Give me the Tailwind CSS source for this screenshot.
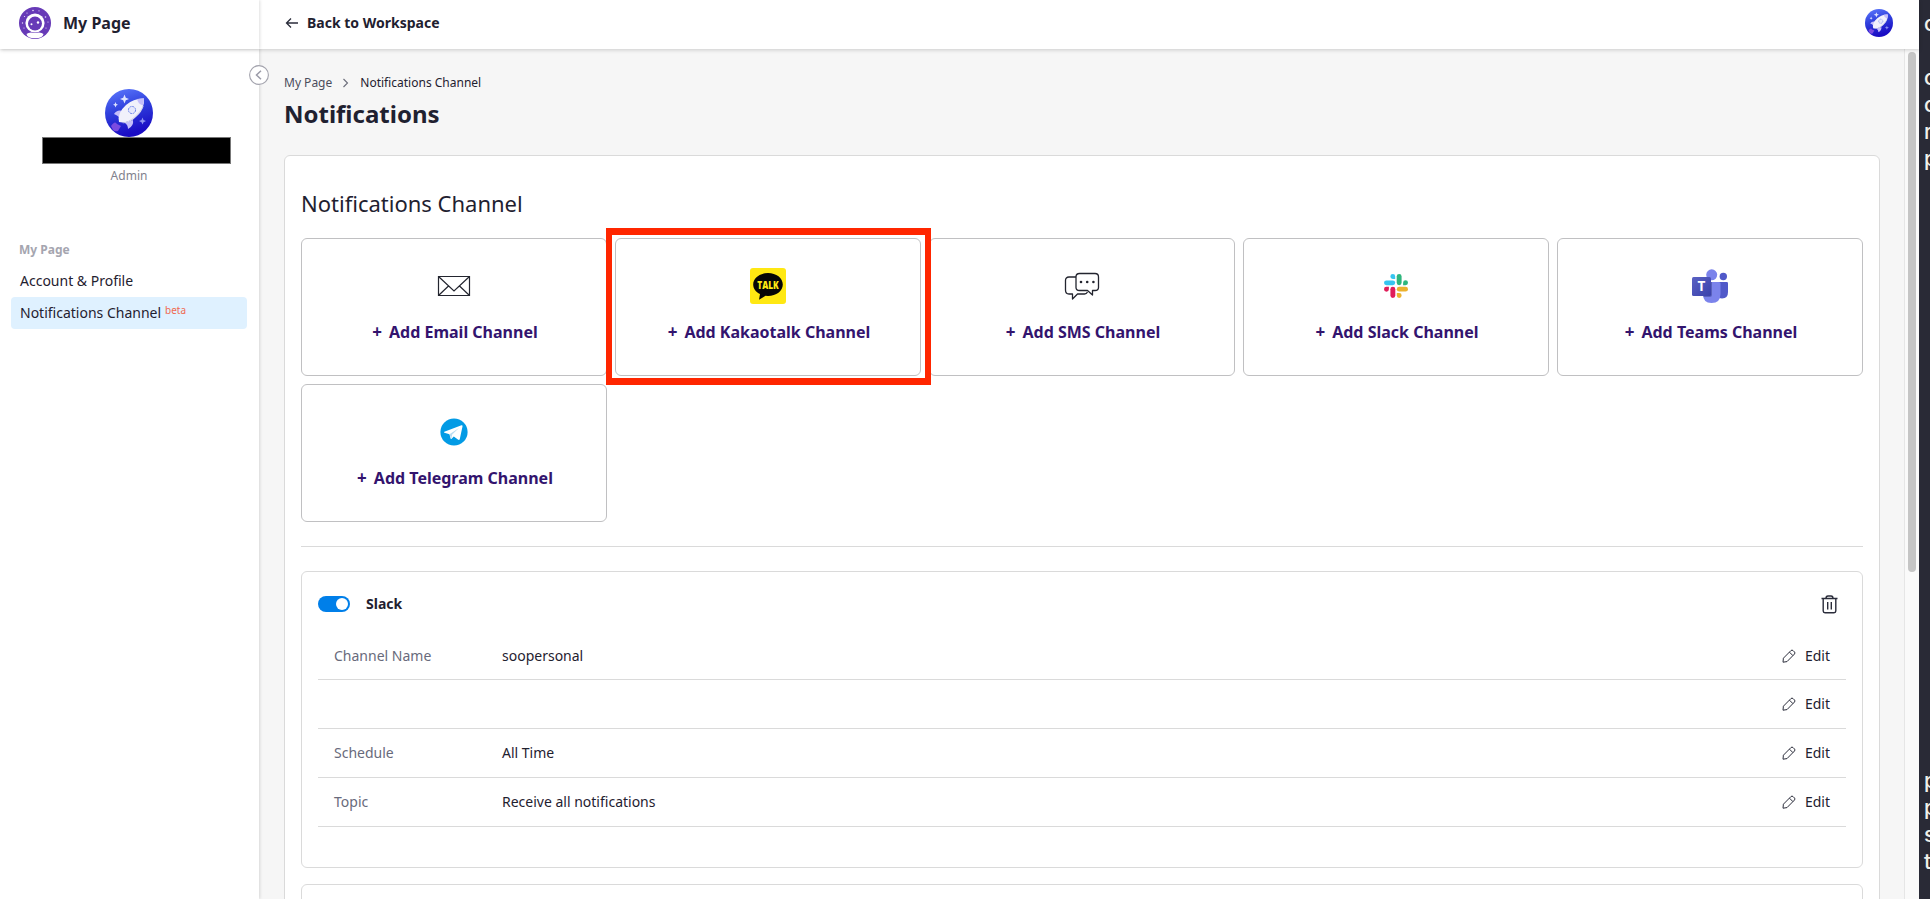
<!DOCTYPE html>
<html lang="en">
<head>
<meta charset="utf-8">
<title>Notifications</title>
<script src="https://cdn.jsdelivr.net/npm/@tailwindcss/browser@4"></script>
</head>
<body class="h-[899px] w-[1930px] overflow-hidden bg-white font-['Noto_Sans',sans-serif] text-[#1f2130]">
<svg class="absolute size-0">
  <defs>
    <linearGradient id="sky" x1="0" y1="0" x2="0.3" y2="1"><stop offset="0" stop-color="#5f7cff"/><stop offset="0.5" stop-color="#2f3fdc"/><stop offset="1" stop-color="#1a0cc4"/></linearGradient>
    <linearGradient id="tm" x1="0" y1="0" x2="1" y2="1"><stop offset="0" stop-color="#5a62c3"/><stop offset="1" stop-color="#3940ab"/></linearGradient>
  </defs>
  <symbol id="rocket" viewBox="0 0 48 48">
    <circle cx="24" cy="24" r="24" fill="url(#sky)"/>
    <path d="M6 37Q10 31 12 35L16 37L13 42Q10 43 8 41Z" fill="#7a4be0"/>
    <path d="M9 25Q12 20 18 22L15 29Q12 26 9 25ZM28 31Q29 37 23 40Q23 36 20 34Z" fill="#c5befa"/>
    <path d="M14 33Q12 24 21 16Q29 9 39 9.500Q40 19 31 27Q23 35 14 33Z" fill="#f1f1fb"/>
    <path d="M17 34Q29 32 39 16Q37 23 31 28Q24 35 17 34Z" fill="#d9d9ec"/>
    <path d="M32 10Q35 9.200 39 9.500Q39.200 13 38 16.500Q33 15 32 10Z" fill="#c5befa"/>
    <circle cx="27" cy="21" r="3.600" fill="#e6e8fc" stroke="#6f86ea" stroke-width="1" stroke-dasharray="2 .8"/>
    <path d="M19.500 5.500L20.800 8.700L24 10L20.800 11.300L19.500 14.500L18.200 11.300L15 10L18.200 8.700ZM10.500 13L11.300 15L13 15.800L11.300 16.600L10.500 18.500L9.700 16.600L8 15.800L9.700 15Z" fill="#dfe4ff"/>
    <path d="M37.500 28.500L38.500 31L41 32L38.500 33.200L37.500 35.500L36.500 33.200L34 32L36.500 31Z" fill="#8f94f0"/>
  </symbol>
  <symbol id="pencil" viewBox="0 0 14 14">
    <path d="M1 13.200L1.400 9.200L9 1.500Q10 .7 11 1.500L12.600 3.100Q13.300 4 12.500 5L5 12.600L1 13.200M7.500 3.200L10.900 6.600" fill="none" stroke="#2b2d3b" stroke-width="1"/>
  </symbol>
</svg>
<div class="flex h-[899px]">
  <div class="flex w-[1919px] flex-none flex-col">
    <header class="relative z-10 flex h-[49px] flex-none bg-white shadow-[0_1px_4px_rgba(0,0,0,0.18)]">
      <div class="flex w-[259px] items-center gap-[12px] pb-[3px] pl-[19px] shadow-[1px_0_3px_rgba(0,0,0,0.13)]">
        <svg class="size-8" viewBox="0 0 32 32">
          <circle cx="16" cy="16" r="16" fill="#673ab7"/>
          <path d="M7.500 27Q10 24.500 16 26Q22 24.500 24.500 27Q24 31.200 16 31.200Q8 31.200 7.500 27Z" fill="#fff"/>
          <circle cx="16" cy="16" r="9.600" fill="#fff"/><circle cx="16" cy="16.600" r="7" fill="#673ab7"/>
          <circle cx="12.500" cy="17.300" r="1" fill="#fff"/><circle cx="19" cy="15.500" r="1.200" fill="#fff"/>
          <g fill="#e8defa"><circle cx="14" cy="3.500" r=".8"/><circle cx="20" cy="3.800" r=".6"/><circle cx="8" cy="6" r=".6"/><circle cx="26.500" cy="10" r=".8"/><circle cx="5.500" cy="9.500" r=".6"/><circle cx="3.500" cy="16" r=".7"/><circle cx="29" cy="15" r=".6"/><circle cx="5" cy="21" r=".6"/><circle cx="27" cy="21" r=".6"/></g>
        </svg>
        <span class="text-base font-bold">My Page</span>
      </div>
      <div class="flex flex-1 items-center pr-[26px] pb-[3px] pl-[26px]">
        <svg class="h-[12px] w-[14px]" viewBox="0 0 14 12"><path d="M13 6H1.500M6 1.500L1.500 6L6 10.500" fill="none" stroke="#2b2d3b" stroke-width="1.300"/></svg>
        <span class="ml-[8px] text-sm font-bold">Back to Workspace</span>
        <svg class="ml-auto size-7"><use href="#rocket"/></svg>
      </div>
    </header>
    <div class="flex min-h-0 flex-1">
      <aside class="relative z-[5] flex w-[259px] flex-none flex-col bg-white shadow-[1px_0_3px_rgba(0,0,0,0.13)]">
        <svg class="absolute top-[16px] left-[249px] size-5" viewBox="0 0 20 20"><circle cx="10" cy="10" r="9.400" fill="#fff" stroke="#a3a3ad" stroke-width="1.100"/><path d="M12 5.800L7.500 10L12 14.200" fill="none" stroke="#9b9ba8" stroke-width="1.500"/></svg>
        <div class="flex flex-col items-center pt-[40px] pr-px">
          <svg class="size-12"><use href="#rocket"/></svg>
          <div class="ml-[14px] h-[27px] w-[189px] border border-[#777] bg-black"></div>
          <div class="mt-[3px] text-xs leading-[18px] text-[#82828d]">Admin</div>
        </div>
        <div class="mt-[56px] pl-[19px] text-xs leading-[18px] font-bold text-[#a5a5af]">My Page</div>
        <nav class="mt-[6px] ml-[11px] w-[236px] text-sm">
          <div class="flex h-8 items-center pl-[9px]">Account &amp; Profile</div>
          <div class="flex h-8 items-center rounded bg-[#dff1ff] pl-[9px]">Notifications Channel<span class="ml-1 pb-[5px] text-[10px] text-[#f0694f]">beta</span></div>
        </nav>
      </aside>
      <main class="flex h-full min-w-0 flex-1 flex-col overflow-hidden bg-[#f6f6f6] pr-[24px] pl-[25px]">
        <div class="mt-[25px] flex flex-none items-center text-xs leading-[18px] text-[#4b4d5c]">My Page
          <svg class="mr-[11px] ml-[10px] h-[10px] w-[7px]" viewBox="0 0 7 10"><path d="M1.500 1L5.500 5L1.500 9" fill="none" stroke="#6b6d7a" stroke-width="1.100"/></svg>
          <span class="text-[#1f2130]">Notifications Channel</span></div>
        <h1 class="mt-[4px] flex-none text-2xl leading-9 font-bold">Notifications</h1>
        <section class="mt-[23px] h-[900px] w-[1596px] flex-none rounded-md border border-[#dadada] bg-white px-4 pt-[31px]">
          <h2 class="text-[22px] leading-[32px]">Notifications Channel</h2>
          <div class="relative mt-[19px] grid grid-cols-5 gap-2 text-base font-bold text-[#33146e]">
            <div class="flex h-[138px] flex-col items-center rounded-md border border-[#c0c0c2] pt-[29px]">
              <svg class="size-9" viewBox="0 0 36 36"><path d="M2.500 8.500H33.500V27.500H2.500ZM2.500 8.500L18 23L33.500 8.500M2.500 27.500L12.500 18M33.500 27.500L23.500 18" fill="none" stroke="#23252f" stroke-width="1.200"/></svg>
              <div class="mt-[16px] ml-[2px] flex gap-[7px] leading-6"><span class="text-[17px]">+</span>Add Email Channel</div>
            </div>
            <div class="flex h-[138px] flex-col items-center rounded-md border border-[#c0c0c2] pt-[29px]">
              <svg class="size-9" viewBox="0 0 36 36"><rect width="36" height="36" rx="3" fill="#ffe812"/><path d="M18 5C9.700 5 3.200 10 3.200 16.500C3.200 20.500 5.800 24 10 26L9 31.800L15.500 27.800L18 28C26.300 28 32.800 22.900 32.800 16.500S26.300 5 18 5Z" fill="#060606"/><text x="18" y="20.600" text-anchor="middle" textLength="21.500" lengthAdjust="spacingAndGlyphs" font-size="10.800" font-weight="900" fill="#ffe812" font-family="Open Sans, sans-serif">TALK</text></svg>
              <div class="mt-[16px] ml-[2px] flex gap-[7px] leading-6"><span class="text-[17px]">+</span>Add Kakaotalk Channel</div>
            </div>
            <div class="flex h-[138px] flex-col items-center rounded-md border border-[#c0c0c2] pt-[29px]">
              <svg class="size-9" viewBox="0 0 36 36"><g fill="none" stroke="#23252f" stroke-width="1.300" stroke-linejoin="round"><path d="M15.500 5.500H31Q34.500 5.500 34.500 9V19.500Q34.500 22.500 31 22.500H28.500V27L23.500 22.500H15.500Q12 22.500 12 19.500V9Q12 5.500 15.500 5.500Z"/><path d="M12 9H5Q1.500 9 1.500 12.500V22Q1.500 26 5 26H8.500V31L13.500 26H20.500Q22.500 26 23.500 24"/></g><g fill="#23252f"><circle cx="17" cy="14" r="1.300"/><circle cx="23.200" cy="14" r="1.300"/><circle cx="29.400" cy="14" r="1.300"/></g></svg>
              <div class="mt-[16px] ml-[2px] flex gap-[7px] leading-6"><span class="text-[17px]">+</span>Add SMS Channel</div>
            </div>
            <div class="flex h-[138px] flex-col items-center rounded-md border border-[#c0c0c2] pt-[29px]">
              <svg class="size-9" viewBox="0 0 36 36"><g transform="translate(6 6)">
                <g fill="#36c5f0"><path d="M8.800 0A2.400 2.400 0 1 0 8.800 4.900H11.200V2.400A2.400 2.400 0 0 0 8.800 0Z"/><rect y="6.400" width="11.200" height="4.900" rx="2.450"/></g>
                <g fill="#2eb67d" transform="rotate(90 12 12)"><path d="M8.800 0A2.400 2.400 0 1 0 8.800 4.900H11.200V2.400A2.400 2.400 0 0 0 8.800 0Z"/><rect y="6.400" width="11.200" height="4.900" rx="2.450"/></g>
                <g fill="#ecb22e" transform="rotate(180 12 12)"><path d="M8.800 0A2.400 2.400 0 1 0 8.800 4.900H11.200V2.400A2.400 2.400 0 0 0 8.800 0Z"/><rect y="6.400" width="11.200" height="4.900" rx="2.450"/></g>
                <g fill="#e01e5a" transform="rotate(270 12 12)"><path d="M8.800 0A2.400 2.400 0 1 0 8.800 4.900H11.200V2.400A2.400 2.400 0 0 0 8.800 0Z"/><rect y="6.400" width="11.200" height="4.900" rx="2.450"/></g>
              </g></svg>
              <div class="mt-[16px] ml-[2px] flex gap-[7px] leading-6"><span class="text-[17px]">+</span>Add Slack Channel</div>
            </div>
            <div class="flex h-[138px] flex-col items-center rounded-md border border-[#c0c0c2] pt-[29px]">
              <svg class="size-9" viewBox="0 0 36 36"><circle cx="31.300" cy="8.500" r="3.700" fill="#5059c9"/><path d="M25 14H34.700Q36 14 36 15.300V24Q36 30.500 30 30.500Q27 30.500 25 28Z" fill="#5059c9"/><circle cx="19.700" cy="6.800" r="5.500" fill="#7b83eb"/><path d="M11 14H27Q28.500 14 28.500 15.500V26Q28.500 35 19.500 35Q11 35 11 26Z" fill="#7b83eb"/><path d="M11 14H20V26.500Q20 29 17.500 29H11.500Z" fill="#4c52a8" opacity=".7"/><rect x="0" y="9" width="19" height="19" rx="1.500" fill="url(#tm)"/><text x="9.500" y="23.200" text-anchor="middle" font-size="13.500" font-weight="700" fill="#fff" font-family="Open Sans, sans-serif">T</text></svg>
              <div class="mt-[16px] ml-[2px] flex gap-[7px] leading-6"><span class="text-[17px]">+</span>Add Teams Channel</div>
            </div>
            <div class="flex h-[138px] flex-col items-center rounded-md border border-[#c0c0c2] pt-[29px]">
              <svg class="size-9" viewBox="0 0 36 36"><circle cx="18" cy="18" r="13.600" fill="#039be5"/><path d="M8.300 17.800L25.500 11.200Q26.800 10.900 26.500 12.400L23.800 25Q23.400 26.500 21.900 25.600L17.800 22.500L15.600 24.700Q14.700 25.400 14.500 24.300L13.500 20.200L8.400 18.700Q7.500 18.200 8.300 17.800Z" fill="#fff"/><path d="M13.500 20.200L23 13.900L16.200 20.600L15.300 24.700Z" fill="#b9dcf0"/></svg>
              <div class="mt-[16px] ml-[2px] flex gap-[7px] leading-6"><span class="text-[17px]">+</span>Add Telegram Channel</div>
            </div>
            <div class="absolute -top-[10px] left-[305px] h-[157px] w-[325px] border-[6px] border-y-[7px] border-[#ff2600]"></div>
          </div>
          <hr class="mt-[24px] border-[#dadada]">
          <div class="mt-[24px] h-[297px] rounded-md border border-[#dadada] px-4 text-sm">
            <div class="flex h-[59px] items-center pt-[5px] pr-[8px]">
              <div class="flex h-4 w-8 items-center justify-end rounded-full bg-[#007fe9] pr-[2px]"><div class="size-3 rounded-full bg-white"></div></div>
              <b class="ml-4">Slack</b>
              <svg class="ml-auto h-[19px] w-[17px]" viewBox="0 0 17 19"><g fill="none" stroke="#2b2d3b" stroke-width="1.400"><path d="M.5 3.500H16.500M5 3.200Q5 1 7 1H10Q12 1 12 3.200M2.200 3.500V16Q2.200 17.700 4 17.700H13Q14.800 17.700 14.800 16V3.500M6.700 7V14.500M10.300 7V14.500"/></g></svg>
            </div>
            <div class="flex h-[49px] items-center border-b border-[#dadada] px-4 pt-[2px]"><span class="w-[168px] text-[#686a7b]">Channel Name</span>soopersonal<svg class="mr-[9px] ml-auto size-[14px]"><use href="#pencil"/></svg>Edit</div>
            <div class="flex h-[49px] items-center border-b border-[#dadada] px-4"><svg class="mr-[9px] ml-auto size-[14px]"><use href="#pencil"/></svg>Edit</div>
            <div class="flex h-[49px] items-center border-b border-[#dadada] px-4"><span class="w-[168px] text-[#686a7b]">Schedule</span>All Time<svg class="mr-[9px] ml-auto size-[14px]"><use href="#pencil"/></svg>Edit</div>
            <div class="flex h-[49px] items-center border-b border-[#dadada] px-4"><span class="w-[168px] text-[#686a7b]">Topic</span>Receive all notifications<svg class="mr-[9px] ml-auto size-[14px]"><use href="#pencil"/></svg>Edit</div>
          </div>
          <div class="mt-[16px] h-[297px] rounded-md border border-[#dadada]"></div>
        </section>
      </main>
      <div class="w-[15px] flex-none border-l border-[#e6e6e6] bg-[#fafafa] pt-[3px] pl-[3px]"><div class="h-[520px] w-2 rounded-full bg-[#c5c5c5]"></div></div>
    </div>
  </div>
  <div class="flex w-[11px] flex-none flex-col overflow-hidden bg-[#292a36] pl-[5px] font-[Inter,sans-serif] text-[21px] leading-[27px] font-medium text-[#f1f1ea]">
    <div class="mt-[10px]">c</div><div class="mt-[27px]">c</div><div>c</div><div>r</div><div>p</div>
    <div class="mt-[595px]">p</div><div>p</div><div>s</div><div>t</div>
  </div>
</div>
</body>
</html>
